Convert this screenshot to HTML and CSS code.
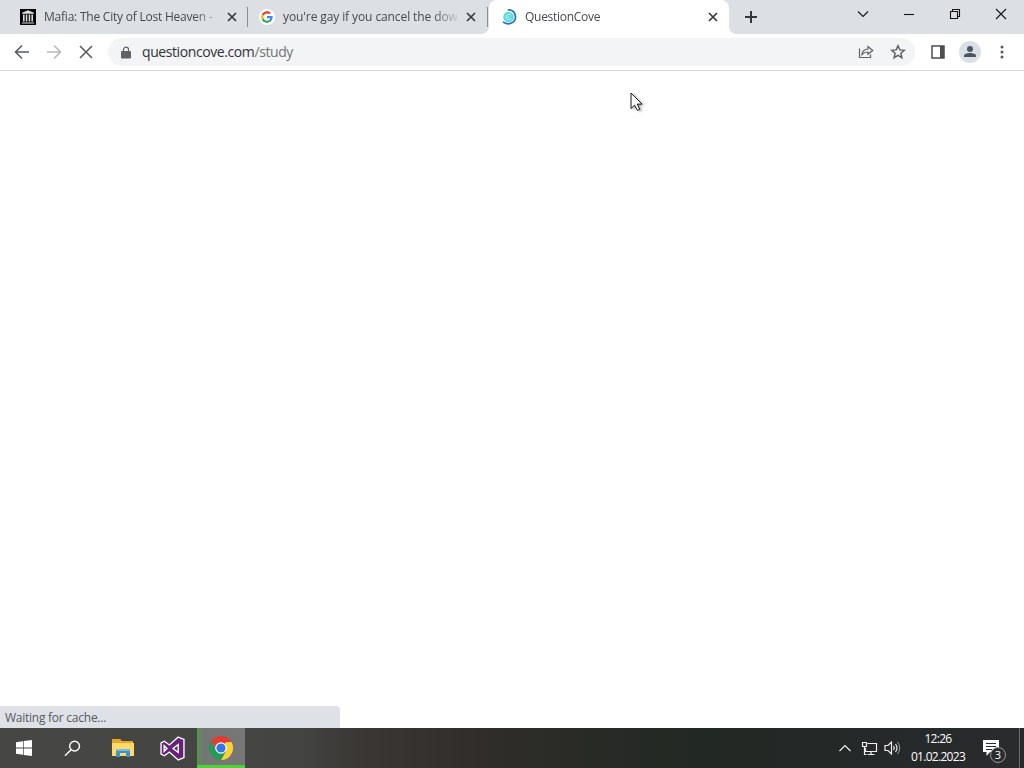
FILE: index.html
```
<!DOCTYPE html>
<html lang="en">
<head>
  <meta charset="UTF-8">
  <meta name="viewport" content="width=device-width, initial-scale=1.0">
  <title>QuestionCove</title>
  <link rel="stylesheet" href="styles.css">
</head>
<body>
  <div class="desktop">
    <!-- Tab strip -->
    <header class="tab-strip">
      <div class="tab tab-first">
        <svg class="favicon" viewBox="0 0 16 16">
          <path fill="#050505" d="M0 0h16v16H0z"/>
          <path fill="#ddd" d="M8 1.2 14 3.7v1H2v-1zM3 5.5h1.6v7H3zM5.8 5.5h1.5v7H5.8zM8.7 5.5h1.5v7H8.7zM11.4 5.5H13v7h-1.6zM2 13.4h12v1.2H2z"/>
        </svg>
        <span class="tab-title title-mafia">Mafia: The City of Lost Heaven -</span>
        <svg class="tab-close" viewBox="0 0 10 10"><path d="M1 1l8 8M9 1L1 9"/></svg>
      </div>
      <span class="tab-divider"></span>
      <div class="tab tab-second">
        <svg class="favicon google" viewBox="0 0 48 48">
          <path fill="#ea4335" d="M24 9.5c3.5 0 6.700 1.200 9.200 3.600l6.900-6.900C35.900 2.400 30.500 0 24 0 14.600 0 6.500 5.400 2.600 13.200l8 6.200C12.400 13.700 17.700 9.500 24 9.500z"/>
          <path fill="#4285f4" d="M47 24.500c0-1.600-.2-3.100-.4-4.500H24v9h12.900c-.6 3-2.200 5.500-4.700 7.200l7.700 6C44.400 38 47 31.800 47 24.500z"/>
          <path fill="#fbbc05" d="M10.500 28.600c-.5-1.500-.8-3-.8-4.600s.3-3.100.8-4.600l-8-6.200C.9 16.500 0 20.100 0 24s.9 7.500 2.600 10.800z"/>
          <path fill="#34a853" d="M24 48c6.500 0 11.900-2.100 15.900-5.800l-7.700-6c-2.200 1.400-4.900 2.300-8.200 2.300-6.300 0-11.600-4.200-13.500-9.900l-8 6.200C6.500 42.600 14.600 48 24 48z"/>
        </svg>
        <span class="tab-title title-google">you're gay if you cancel the dow</span>
        <svg class="tab-close" viewBox="0 0 10 10"><path d="M1 1l8 8M9 1L1 9"/></svg>
      </div>
      <span class="tab-divider"></span>
      <div class="tab tab-active">
        <svg class="favicon" viewBox="0 0 16 16">
          <circle cx="7.500" cy="8" r="5.300" fill="#62d8dc"/>
          <path d="M10 6.200C8.500 4.500 5 5.300 5.100 8.200c.2 2.700 3.700 3.300 5 1.300M8 7.300c-1.200.3-.9 1.500.2 1.300" fill="none" stroke="#c6fff0" stroke-width=".9"/>
          <path d="M6.800 1c4-.8 8 2.400 7.700 7.200-.4 6-7.500 8.700-12.600 4.700" fill="none" stroke="#2870b8" stroke-width="1.700"/>
        </svg>
        <span class="tab-title title-active">QuestionCove</span>
        <svg class="tab-close" viewBox="0 0 10 10"><path d="M1 1l8 8M9 1L1 9"/></svg>
      </div>
      <svg class="new-tab" viewBox="0 0 14 14"><path d="M7 1v12M1 7h12"/></svg>

      <div class="window-controls">
        <svg viewBox="0 0 12 12"><path d="M1 3.500l5 5 5-5"/></svg>
        <svg viewBox="0 0 12 12"><path d="M1 6.500h10"/></svg>
        <svg viewBox="0 0 12 12"><path d="M1.500 3.500h7v7h-7zM3.500 3.500v-2h7v7h-2"/></svg>
        <svg viewBox="0 0 12 12"><path d="M1 1l10 10M11 1L1 11"/></svg>
      </div>
    </header>

    <!-- Toolbar -->
    <div class="toolbar">
      <div class="nav-buttons">
        <svg viewBox="0 0 16 16"><path d="M15 8H2M8 1.500L1.500 8 8 14.500"/></svg>
        <svg class="disabled" viewBox="0 0 16 16"><path d="M1 8h13M8 1.500L14.500 8 8 14.500"/></svg>
        <svg viewBox="0 0 16 16"><path d="M2 2l12 12M14 2L2 14"/></svg>
      </div>
      <div class="address-bar">
        <svg class="lock" viewBox="0 0 10 12"><path fill="#5f6368" d="M1 4.500h8q1 0 1 1V11q0 1-1 1H1q-1 0-1-1V5.500q0-1 1-1z"/><path d="M2.500 5V3a2.500 2.300 0 0 1 5 0v2" fill="none" stroke="#5f6368" stroke-width="1.200"/></svg>
        <span class="url">questioncove.com<span class="path">/study</span></span>
        <svg class="share" viewBox="0 0 16 16"><path d="M1.500 4.500v9h11v-3M4 10.500c.3-3.500 2.300-5.300 6-5.500V2.500L14.800 6.500 10 10.300V8C7.400 8 5.500 8.700 4 10.500z"/></svg>
        <svg class="star" viewBox="0 0 16 16"><path d="M8 1.800l1.800 4.100 4.500.4-3.400 3 1 4.400L8 11.400l-3.900 2.300 1-4.400-3.400-3 4.500-.4z"/></svg>
      </div>
      <svg class="side-panel" viewBox="0 0 14 14"><path d="M1 1h12v12H1z" fill="#fff" stroke="#4c4d50" stroke-width="1.500"/><path d="M9 1h4v12H9z" fill="#4c4d50"/></svg>
      <svg class="avatar" viewBox="0 0 22 22"><circle cx="11" cy="11" r="11" fill="#dadfe6"/><circle cx="11" cy="8" r="3" fill="#4b5663"/><path d="M5 16v-1.300c0-3.600 12-3.600 12 0V16z" fill="#4b5663"/></svg>
      <svg class="menu" viewBox="0 0 4 14"><circle cx="2" cy="2" r="1.500"/><circle cx="2" cy="7" r="1.500"/><circle cx="2" cy="12" r="1.500"/></svg>
    </div>

    <!-- Empty page while loading -->
    <main class="page">
      <div class="status">Waiting for cache...</div>
    </main>

    <!-- Taskbar -->
    <footer class="taskbar">
      <div class="task-item start">
        <svg class="windows" viewBox="0 0 16 16"><path fill="#fff" d="M0 2.200l7-1v6.400H0zM7.700 1.100L16 0v7.600H7.700zM0 8.400h7v6.400l-7-1zM7.700 8.400H16V16l-8.300-1.100z"/></svg>
      </div>
      <div class="task-item">
        <svg class="search" viewBox="0 0 18 18"><circle cx="11.200" cy="6.500" r="5.200"/><path d="M7.500 10.200L1 16.700"/></svg>
      </div>
      <div class="task-item explorer">
        <svg class="folder" viewBox="0 0 22 18"><path fill="#e8a624" d="M0 0h8l2 2h11v4H0z"/><path fill="#ffda67" d="M0 4h22v13H0z"/><path fill="#3f91cc" d="M4 18v-7q0-1 1-1h12q1 0 1 1v7h-4v-4H8v4z"/><path fill="#75bceb" d="M4 11q0-1 1-1h12q1 0 1 1v1H4z"/></svg>
      </div>
      <div class="task-item">
        <svg class="vs" viewBox="0 0 24 24"><path d="M17.500 1L23 3.300v17.400L17.500 23 9 15.400 4.200 19 1 17.300V6.700L4.200 5 9 8.600zM17.500 8.200L12.500 12l5 3.800zM4 9.300v5.400L6.700 12z" fill="#68217a" fill-rule="evenodd" stroke="#fff" stroke-width="1.300"/></svg>
      </div>
      <div class="task-item running">
        <svg class="chrome" viewBox="0 0 24 24">
          <path fill="#e33b2e" d="M12 12L1.600 6A12 12 0 0 1 22.400 6z"/>
          <path fill="#fdd135" d="M12 12l5.200-6h5.200A12 12 0 0 1 12 24z"/>
          <path fill="#239a55" d="M1.600 6L6.800 15 12 17.500 17.200 15 12 24A12 12 0 0 1 1.600 6z"/>
          <circle cx="12" cy="12" r="5.800" fill="#fff"/><circle cx="12" cy="12" r="4.600" fill="#3578e5"/>
        </svg>
      </div>

      <div class="tray">
        <svg class="tray-up" viewBox="0 0 12 8"><path d="M.5 7L6 1.500 11.500 7"/></svg>
        <svg class="network" viewBox="0 0 17 15"><path d="M6.500 2.500h9v8h-11V7M10 10.500v3M6.500 13.500h7M1.500 1.500h4v4h-4zM3.500 5.500v8h2"/></svg>
        <svg class="volume" viewBox="0 0 17 14"><path d="M1 4.500h3L7.500 1v12L4 9.500H1zM9.500 5q1.500 2 0 4M11.500 3q3 4 0 8"/><path class="faint" d="M13.500 1q4.500 6 0 12"/></svg>
        <div class="clock"><span>12:26</span><span>01.02.2023</span></div>
        <div class="notifications">
          <svg viewBox="0 0 16 16"><path fill="#fff" d="M0 0h16v12H7l-3.500 4v-4H0z"/><path d="M3 3.500h10M3 6.500h10M3 9.500h6" stroke="#292c2c"/></svg>
          <span class="badge">3</span>
        </div>
        <span class="show-desktop"></span>
      </div>
    </footer>

    <svg class="cursor" viewBox="0 0 14 20"><path d="M1 1v15.500l3.600-3.400 2.700 5.300 2.500-1.200-2.600-5.100H12z" fill="#fff" stroke="#171717"/></svg>
  </div>
</body>
</html>
```
FILE: styles.css
```
/* General Styles */
* {
  box-sizing: border-box;
}

body {
  margin: 0;
  font-family: 'Open Sans', 'Noto Sans', sans-serif;
  font-size: 12px;
  color: #46494d;
}

svg {
  display: block;
  flex: none;
  fill: none;
}

.desktop {
  position: relative;
  display: flex;
  flex-direction: column;
  width: 1024px;
  height: 768px;
  overflow: hidden;
  background: #fff;
}

/* Tab strip */
.tab-strip {
  display: flex;
  height: 34px;
  background: #dcdfe4;
}

.tab {
  display: flex;
  align-items: center;
  height: 34px;
}

.tab-first {
  width: 247px;
  padding-left: 20px;
}

.tab-second {
  width: 239px;
  padding-left: 11px;
}

.tab-active {
  position: relative;
  width: 240px;
  margin-left: 1px;
  padding-left: 12px;
  background: #fff;
  border-radius: 8px 8px 0 0;
}

/* Curved feet of the active tab */
.tab-active::before,
.tab-active::after {
  content: '';
  position: absolute;
  bottom: 0;
  width: 7px;
  height: 7px;
}

.tab-active::before {
  left: -7px;
  background: radial-gradient(circle at 0 0, transparent 6.500px, #fff 7px);
}

.tab-active::after {
  right: -7px;
  background: radial-gradient(circle at 100% 0, transparent 6.500px, #fff 7px);
}

.tab-divider {
  width: 1px;
  height: 20px;
  margin-top: 7px;
  background: #8b8e93;
}

.favicon {
  width: 16px;
  height: 16px;
}

.google {
  padding: 2px;
  border-radius: 50%;
  background: #fff;
}

.tab-title {
  width: 174px;
  margin-left: 8px;
  white-space: nowrap;
  line-height: 18px;
  -webkit-mask-image: linear-gradient(to right, #000 150px, transparent 178px);
  mask-image: linear-gradient(to right, #000 150px, transparent 178px);
}

.title-mafia {
  letter-spacing: -0.220px;
}

.title-google {
  letter-spacing: -0.100px;
}

.title-active {
  letter-spacing: -0.280px;
}

.tab-close {
  width: 10px;
  height: 10px;
  margin-left: 9px;
  stroke: #37393c;
  stroke-width: 1.700;
}

.new-tab {
  width: 14px;
  height: 14px;
  margin: 10px 0 0 15px;
  stroke: #34373b;
  stroke-width: 2;
}

.window-controls {
  display: flex;
  gap: 34px;
  margin: 8px 17px 0 auto;
}

.window-controls svg {
  width: 12px;
  height: 12px;
  stroke: #151515;
  stroke-width: 1.100;
}

/* Toolbar */
.toolbar {
  display: flex;
  align-items: center;
  height: 37px;
  padding: 0 20px 0 14px;
  border-bottom: 1px solid #d8d8da;
}

.nav-buttons {
  display: flex;
  gap: 16px;
}

.nav-buttons svg {
  width: 16px;
  height: 16px;
  stroke: #5a5d60;
  stroke-width: 1.600;
}

.nav-buttons .disabled {
  stroke: #b8babb;
}

.address-bar {
  display: flex;
  align-items: center;
  width: 807px;
  height: 28px;
  margin-left: 14px;
  padding: 0 9px 0 13px;
  border-radius: 14px;
  background: #f2f4f5;
}

.lock {
  width: 10px;
  height: 13px;
}

.url {
  margin-left: 11px;
  margin-right: auto;
  font-size: 14px;
  line-height: 20px;
  letter-spacing: -0.410px;
  color: #303235;
}

.path {
  color: #717477;
}

.share,
.star {
  width: 16px;
  height: 16px;
  stroke: #5e6165;
  stroke-width: 1.200;
}

.star {
  margin-left: 16px;
  stroke-width: 1.500;
}

.side-panel {
  width: 14px;
  height: 14px;
  margin-left: 16px;
}

.avatar {
  width: 22px;
  height: 22px;
  margin-left: 14px;
}

.menu {
  width: 4px;
  height: 14px;
  margin-left: auto;
  fill: #55585b;
}

/* Page */
.page {
  display: flex;
  flex: 1;
  align-items: flex-end;
}

.status {
  width: 340px;
  height: 22px;
  padding-left: 5px;
  border-radius: 0 4px 0 0;
  background: #dee1e5;
  line-height: 23px;
  letter-spacing: -0.250px;
  color: #565a5f;
}

/* Taskbar */
.taskbar {
  display: flex;
  height: 40px;
  background: linear-gradient(to right, #464644 0, #444442 300px, #3a3734 360px, #302d2a 480px, #282a26 590px, #222823 700px, #242827 820px, #292b2d 1024px);
  color: #fff;
}

.task-item {
  display: flex;
  align-items: center;
  justify-content: center;
  width: 49px;
}

.start {
  width: 48px;
}

.explorer {
  width: 51px;
}

.running {
  width: 48px;
  background: linear-gradient(to right, #559450 0, #6b806a 5px, #757575 6px, #777 100%);
  border-bottom: 3px solid #4bd534;
}

.windows {
  width: 16px;
  height: 16px;
}

.search {
  width: 17px;
  height: 17px;
  stroke: #fff;
  stroke-width: 1.500;
}

.folder {
  width: 22px;
  height: 18px;
}

.vs {
  width: 25px;
  height: 25px;
}

.chrome {
  width: 24px;
  height: 24px;
  margin-top: 2px;
}

.tray {
  display: flex;
  align-items: center;
  margin-left: auto;
}

.tray > svg {
  stroke: #eee;
  stroke-width: 1.200;
}

.tray-up {
  width: 12px;
  height: 8px;
}

.network {
  width: 17px;
  height: 15px;
  margin-left: 10px;
}

.volume {
  width: 17px;
  height: 14px;
  margin-left: 6px;
}

.faint {
  stroke: #888;
}

.clock {
  display: flex;
  flex-direction: column;
  align-items: center;
  width: 56px;
  margin-left: 9px;
  padding-bottom: 1px;
  font-size: 12px;
  line-height: 18px;
  letter-spacing: -0.700px;
  white-space: nowrap;
}

.notifications {
  position: relative;
  margin-left: 17px;
}

.notifications svg {
  width: 16px;
  height: 16px;
}

.badge {
  position: absolute;
  top: 7px;
  left: 7px;
  width: 16px;
  height: 16px;
  border: 1px solid #999;
  border-radius: 50%;
  background: #292c2c;
  font-size: 11px;
  line-height: 14px;
  text-align: center;
}

.show-desktop {
  width: 5px;
  height: 40px;
  margin-left: 20px;
  border-left: 1px solid #6a6c6c;
}

/* Mouse pointer */
.cursor {
  position: absolute;
  top: 92px;
  left: 630px;
  width: 14px;
  height: 20px;
  filter: drop-shadow(2px 1px 1px rgba(0, 0, 0, 0.3));
}
```
